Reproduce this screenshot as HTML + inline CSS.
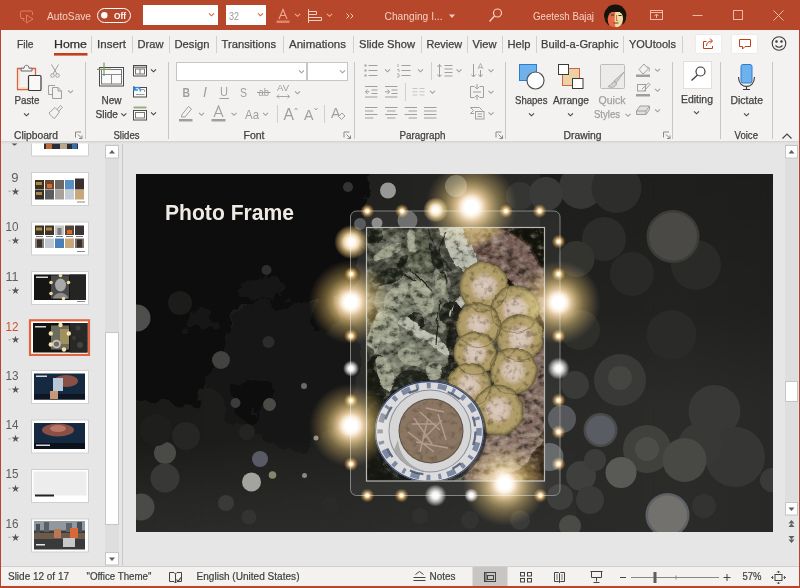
<!DOCTYPE html>
<html lang="en">
<head>
<meta charset="utf-8">
<title>Changing Images - PowerPoint</title>
<style>
html,body{margin:0;padding:0;}
body{width:800px;height:588px;overflow:hidden;position:relative;background:#E6E6E6;font-family:"Liberation Sans",sans-serif;}
.abs{position:absolute;}
#titlebar{left:0;top:0;width:800px;height:30px;background:#B7472A;}
#tabs{left:0;top:30px;width:800px;height:27px;background:#F3F2F1;}
#ribbon{left:0;top:57px;width:800px;height:84px;background:#F3F2F1;}
#ribbonshadow{left:0;top:141px;width:800px;height:3px;background:linear-gradient(#D2D0CE,#DEDEDE 50%,#E6E6E6);}
#leftpane{left:1px;top:144px;width:121px;height:422px;background:#E6E6E6;}
#splitter{left:122px;top:144px;width:1px;height:422px;background:#C8C8C8;}
#status{left:0;top:566px;width:800px;height:20px;background:#F3F2F1;border-top:1px solid #D0D0D0;box-sizing:border-box;}
#bl{left:0;top:30px;width:1px;height:558px;background:#B7472A;}
#br{left:799px;top:30px;width:1px;height:558px;background:#B7472A;}
#bb{left:0;top:586px;width:800px;height:2px;background:#B7472A;}
svg{position:absolute;left:0;top:0;overflow:hidden;will-change:transform;}
svg text{font-family:"Liberation Sans",sans-serif;}
#lights circle{mix-blend-mode:screen;}
</style>
</head>
<body>
<div id="titlebar" class="abs"></div>
<div id="tabs" class="abs"></div>
<div id="ribbon" class="abs"></div>
<div id="ribbonshadow" class="abs"></div>
<div id="leftpane" class="abs"></div>
<div id="splitter" class="abs"></div>
<div id="status" class="abs"></div>

<!-- SLIDE -->
<svg id="slide" width="800" height="588" viewBox="0 0 800 588">
<defs>
  <clipPath id="sc"><rect x="136" y="174" width="637" height="358"/></clipPath>
  <clipPath id="pc"><rect x="366.500" y="227.500" width="178" height="253.500"/></clipPath>
  <linearGradient id="bgx" x1="136" x2="773" y1="0" y2="0" gradientUnits="userSpaceOnUse">
    <stop offset="0" stop-color="#1A1A19"/>
    <stop offset="0.330" stop-color="#1F1F1E"/>
    <stop offset="0.600" stop-color="#282826"/>
    <stop offset="0.850" stop-color="#2B2B29"/>
    <stop offset="1" stop-color="#282826"/>
  </linearGradient>
  <linearGradient id="trd" x1="0" x2="0" y1="174" y2="404" gradientUnits="userSpaceOnUse">
    <stop offset="0" stop-color="#141413" stop-opacity="0.550"/>
    <stop offset="0.600" stop-color="#141413" stop-opacity="0.400"/>
    <stop offset="1" stop-color="#141413" stop-opacity="0"/>
  </linearGradient>
  <linearGradient id="blg" x1="0" x2="0" y1="440" y2="532" gradientUnits="userSpaceOnUse">
    <stop offset="0" stop-color="#2E2E2C" stop-opacity="0"/>
    <stop offset="0.600" stop-color="#2E2E2C" stop-opacity="0.550"/>
    <stop offset="1" stop-color="#2E2E2C" stop-opacity="0.800"/>
  </linearGradient>
  <filter id="rough3" x="-10%" y="-10%" width="120%" height="120%">
    <feTurbulence type="fractalNoise" baseFrequency="0.035" numOctaves="4" seed="2" result="t"/>
    <feDisplacementMap in="SourceGraphic" in2="t" scale="38" xChannelSelector="R" yChannelSelector="G"/>
  </filter>
  <radialGradient id="gl">
    <stop offset="0" stop-color="#FFFFFF"/>
    <stop offset="0.140" stop-color="#FFFFFF"/>
    <stop offset="0.220" stop-color="#F8E8D0"/>
    <stop offset="0.320" stop-color="#D4B484"/>
    <stop offset="0.450" stop-color="#9A824C"/>
    <stop offset="0.600" stop-color="#62522A"/>
    <stop offset="0.780" stop-color="#332914"/>
    <stop offset="0.900" stop-color="#15110A"/>
    <stop offset="1" stop-color="#000000"/>
  </radialGradient>
  <radialGradient id="gs">
    <stop offset="0" stop-color="#FFFFFF"/>
    <stop offset="0.220" stop-color="#FFF0D0"/>
    <stop offset="0.420" stop-color="#C89850"/>
    <stop offset="0.700" stop-color="#553E1A"/>
    <stop offset="1" stop-color="#000000"/>
  </radialGradient>
  <radialGradient id="gw">
    <stop offset="0" stop-color="#FFFFFF"/>
    <stop offset="0.300" stop-color="#F4F4F4"/>
    <stop offset="0.600" stop-color="#9A9A9A"/>
    <stop offset="0.850" stop-color="#3A3A3A"/>
    <stop offset="1" stop-color="#000000"/>
  </radialGradient>
  <radialGradient id="gm">
    <stop offset="0" stop-color="#FFFFFF"/>
    <stop offset="0.250" stop-color="#FFF6E8"/>
    <stop offset="0.450" stop-color="#E8D0A8"/>
    <stop offset="0.650" stop-color="#9A8050"/>
    <stop offset="0.850" stop-color="#4A3C20"/>
    <stop offset="1" stop-color="#000000"/>
  </radialGradient>
  <filter id="rough" x="-5%" y="-5%" width="110%" height="110%">
    <feTurbulence type="fractalNoise" baseFrequency="0.055" numOctaves="3" seed="7" result="t"/>
    <feDisplacementMap in="SourceGraphic" in2="t" scale="6" xChannelSelector="R" yChannelSelector="G"/>
  </filter>
  <filter id="rough2" x="-5%" y="-5%" width="110%" height="110%">
    <feTurbulence type="fractalNoise" baseFrequency="0.08" numOctaves="2" seed="3" result="t"/>
    <feDisplacementMap in="SourceGraphic" in2="t" scale="4" xChannelSelector="R" yChannelSelector="G"/>
  </filter>
  <filter id="npk" x="0" y="0" width="100%" height="100%" color-interpolation-filters="sRGB">
    <feTurbulence type="fractalNoise" baseFrequency="0.16" numOctaves="3" seed="5" result="t"/>
    <feColorMatrix in="t" type="matrix" values="0 0 0 0 0.200  0 0 0 0 0.180  0 0 0 0 0.100  1 0 0 0 0"/>
    <feComponentTransfer result="n"><feFuncA type="table" tableValues="1 1 0.9 0.55 0.2 0 0 0 0 0 0"/></feComponentTransfer>
    <feComposite in="n" in2="SourceGraphic" operator="in"/>
  </filter>
  <filter id="ndark" x="0" y="0" width="100%" height="100%" color-interpolation-filters="sRGB">
    <feTurbulence type="fractalNoise" baseFrequency="0.13 0.16" numOctaves="4" seed="11"/>
    <feColorMatrix type="matrix" values="0 0 0 0 0.050  0 0 0 0 0.050  0 0 0 0 0.040  1 0 0 0 0"/>
    <feComponentTransfer><feFuncA type="table" tableValues="0.7 0.7 0.62 0.42 0.16 0 0 0 0 0 0"/></feComponentTransfer>
  </filter>
  <filter id="nlight" x="0" y="0" width="100%" height="100%" color-interpolation-filters="sRGB">
    <feTurbulence type="fractalNoise" baseFrequency="0.13 0.16" numOctaves="4" seed="11"/>
    <feColorMatrix type="matrix" values="0 0 0 0 0.930  0 0 0 0 0.930  0 0 0 0 0.880  1 0 0 0 0"/>
    <feComponentTransfer><feFuncA type="table" tableValues="0 0 0 0 0 0 0.08 0.2 0.3 0.35 0.35"/></feComponentTransfer>
  </filter>
  <radialGradient id="pk">
    <stop offset="0" stop-color="#DCCCC0"/>
    <stop offset="0.400" stop-color="#D2BEAA"/>
    <stop offset="0.600" stop-color="#B29E6C"/>
    <stop offset="0.850" stop-color="#AE9C68"/>
    <stop offset="1" stop-color="#746840"/>
  </radialGradient>
</defs>
<g clip-path="url(#sc)">
  <rect x="136" y="174" width="637" height="358" fill="url(#bgx)"/>
  <!-- black upper-left region with ragged edge -->
  <g filter="url(#rough3)">
    <ellipse cx="285" cy="372" rx="72" ry="74" fill="#181817"/>
    <path d="M100 140 H372 L366 200 L362 250 L352 285 L318 296 L282 304 L236 312 L218 350 L212 396 L165 404 L100 398 Z" fill="#0B0B0A"/>
    <ellipse cx="322" cy="300" rx="12" ry="36" fill="#111110"/>
    <ellipse cx="252" cy="400" rx="14" ry="22" fill="#0F0F0E"/>
    <ellipse cx="330" cy="405" rx="9" ry="28" fill="#131312"/>
    <ellipse cx="262" cy="290" rx="24" ry="16" fill="#161615"/>
    <ellipse cx="200" cy="318" rx="18" ry="12" fill="#131312"/>
  </g>
  <rect x="540" y="174" width="233" height="230" fill="url(#trd)"/>
  <rect x="136" y="440" width="440" height="92" fill="url(#blg)"/>
  <!-- bokeh -->
  <g id="bokeh">
    <circle cx="137" cy="318" r="13.500" fill="#4E4E4C"/>
    <circle cx="141" cy="507" r="13.500" fill="#4A4A48"/>
    <circle cx="180" cy="303" r="12" fill="#1C1C1B"/>
    <circle cx="221" cy="360" r="9" fill="#424240"/>
    <circle cx="165" cy="453" r="11" fill="#4A4A47"/>
    <circle cx="165" cy="478" r="14.500" fill="#383836"/>
    <circle cx="186" cy="436" r="14" fill="#262625"/>
    <circle cx="156" cy="430" r="16" fill="#1E1E1D"/>
    <circle cx="251.500" cy="482" r="9.500" fill="#A4A49E"/>
    <circle cx="260" cy="459" r="8" fill="#585A66"/>
    <circle cx="272.500" cy="475" r="3.800" fill="#86866E"/>
    <circle cx="269.500" cy="404.500" r="6.500" fill="#4A4A47"/>
    <circle cx="235.500" cy="403" r="5" fill="#3C3C3A"/>
    <circle cx="226" cy="503" r="8" fill="#3A3A38"/>
    <circle cx="249" cy="517" r="7.500" fill="#333331"/>
    <circle cx="247" cy="432" r="8" fill="#242423"/>
    <circle cx="266.500" cy="270" r="5" fill="#2E2E2D"/>
    <circle cx="268.500" cy="342" r="6" fill="#2C2C2B"/>
    <circle cx="304" cy="386" r="3" fill="#6A6A68"/>
    <circle cx="316" cy="438" r="2.500" fill="#8A8A78"/>
    <circle cx="304.500" cy="475.500" r="2.500" fill="#8A8A80"/>
    <circle cx="388" cy="190.500" r="8" fill="#989896"/>
    <circle cx="456" cy="186" r="11" fill="#5E5E56"/>
    <circle cx="407.500" cy="220.500" r="10" fill="#666664"/>
    <circle cx="377" cy="223" r="5.500" fill="#868686"/>
    <circle cx="360" cy="224" r="6" fill="#4E5256"/>
    <circle cx="520" cy="196" r="14" fill="#353533"/>
    <circle cx="348" cy="187" r="5" fill="#333331"/>
    <!-- right upper -->
    <circle cx="581" cy="187" r="22" fill="#373735"/>
    <circle cx="616.500" cy="188" r="25" fill="#2D2D2B"/>
    <circle cx="546" cy="194" r="17" fill="#3A3A38"/>
    <circle cx="604" cy="239" r="22" fill="#2C2C2A"/>
    <circle cx="576.500" cy="259" r="18" fill="#333330"/>
    <circle cx="632" cy="274" r="22" fill="#292927"/>
    <circle cx="696" cy="265" r="25" fill="#2A2A28"/>
    <circle cx="673" cy="236.500" r="26.500" fill="#3C3C39"/>
    <circle cx="673" cy="236.500" r="24" fill="#4A4946"/>
    <circle cx="671.500" cy="335" r="25" fill="#2A2A28"/>
    <circle cx="580" cy="330" r="20" fill="#2E2E2B"/>
    <!-- right lower -->
    <circle cx="714.500" cy="411" r="26" fill="#383936"/>
    <circle cx="735" cy="457" r="30" fill="#363734"/>
    <circle cx="700" cy="445" r="22" fill="#383936"/>
    <circle cx="620" cy="380" r="26" fill="#393937"/>
    <circle cx="620" cy="378" r="12" fill="#454542"/>
    <circle cx="575" cy="385" r="14" fill="#3A3A38"/>
    <circle cx="600.500" cy="430" r="17" fill="#4A4A4A"/>
    <circle cx="600.500" cy="430" r="14.500" fill="#595C62"/>
    <circle cx="562" cy="419" r="14" fill="#55575B"/>
    <circle cx="647" cy="449" r="24" fill="#40403D"/>
    <circle cx="647" cy="449" r="12" fill="#4C4C49"/>
    <circle cx="684.500" cy="460" r="22" fill="#484845"/>
    <circle cx="621" cy="472.500" r="15.500" fill="#595956"/>
    <circle cx="581" cy="476" r="15" fill="#3F403D"/>
    <circle cx="595" cy="460" r="11" fill="#3C3D3A"/>
    <circle cx="549.500" cy="457" r="14" fill="#5E6262"/>
    <circle cx="570" cy="526" r="11" fill="#4A4A47"/>
    <circle cx="590" cy="500" r="14" fill="#3A3B38"/>
    <circle cx="560" cy="497" r="13" fill="#3E3F3C"/>
    <circle cx="667.500" cy="515" r="22" fill="#5E6066"/>
    <circle cx="667.500" cy="515" r="19.500" fill="#72716E"/>
    <circle cx="704" cy="506" r="12" fill="#333432"/>
    <circle cx="772" cy="480" r="12" fill="#3A3B38"/>
    <circle cx="520" cy="520" r="10" fill="#3A3A38"/>
    <circle cx="470" cy="520" r="9" fill="#333331"/>
    <circle cx="420" cy="516" r="8" fill="#30302E"/>
    <circle cx="330" cy="505" r="9" fill="#2A2A28"/>
  </g>
  <!-- title -->
  <text x="165" y="220" font-size="21.500" font-weight="700" fill="#EFEAE4" textLength="129" lengthAdjust="spacingAndGlyphs">Photo Frame</text>
  <!-- frame -->
  <rect x="350.500" y="211" width="209.500" height="284.500" rx="6" fill="#FFFFFF" fill-opacity="0.060" stroke="#9A9A98" stroke-opacity="0.800" stroke-width="1"/>
  <!-- photo -->
  <g clip-path="url(#pc)">
    <g filter="url(#rough)">
    <rect x="360" y="220" width="190" height="270" fill="#484C40"/>
    <!-- mid-tone leaf masses -->
    <g fill="#767A68">
      <ellipse cx="392" cy="246" rx="26" ry="16" transform="rotate(15 392 246)" fill="#5E6252"/>
      <ellipse cx="420" cy="256" rx="14" ry="26" transform="rotate(-10 420 256)" fill="#5A5E4E"/>
      <ellipse cx="408" cy="300" rx="34" ry="28"/>
      <ellipse cx="392" cy="345" rx="26" ry="30"/>
      <ellipse cx="428" cy="352" rx="26" ry="18" transform="rotate(30 428 352)"/>
      <ellipse cx="440" cy="300" rx="10" ry="34"/>
      <ellipse cx="412" cy="384" rx="26" ry="10"/>
    </g>
    <!-- dark gaps -->
    <g fill="#23261E">
      <ellipse cx="388" cy="277" rx="16" ry="7" transform="rotate(-15 388 277)"/>
      <ellipse cx="374" cy="236" rx="9" ry="7"/>
      <ellipse cx="416" cy="322" rx="9" ry="9"/>
      <ellipse cx="436" cy="258" rx="5" ry="16" transform="rotate(-25 436 258)"/>
      <ellipse cx="449" cy="313" rx="9" ry="12" transform="rotate(15 449 313)"/>
      <ellipse cx="372" cy="316" rx="6" ry="8"/>
      <ellipse cx="376" cy="380" rx="12" ry="26"/>
      <ellipse cx="398" cy="392" rx="22" ry="12"/>
      <ellipse cx="412" cy="381" rx="18" ry="11"/>
      <ellipse cx="370" cy="440" rx="14" ry="50"/>
      <ellipse cx="386" cy="478" rx="26" ry="12"/>
      <ellipse cx="447" cy="372" rx="10" ry="5" transform="rotate(-30 447 372)"/>
      <ellipse cx="402" cy="262" rx="4" ry="10" transform="rotate(40 402 262)"/>
    </g>
    <!-- light leaves -->
    <g fill="#9A9E88">
      <ellipse cx="396.500" cy="296" rx="8" ry="19" transform="rotate(35 396.500 296)"/>
      <ellipse cx="422.500" cy="296" rx="9" ry="20" transform="rotate(-22 422.500 296)"/>
      <ellipse cx="386.500" cy="328" rx="12" ry="17" transform="rotate(-25 386.500 328)"/>
      <ellipse cx="373" cy="340" rx="6" ry="13"/>
      <ellipse cx="384.500" cy="374" rx="8" ry="18" transform="rotate(-22 384.500 374)"/>
      <ellipse cx="410" cy="357" rx="13" ry="8" transform="rotate(25 410 357)"/>
      <ellipse cx="434" cy="371" rx="8" ry="9"/>
      <ellipse cx="388" cy="252" rx="16" ry="5" transform="rotate(-25 388 252)"/>
      <ellipse cx="412" cy="240" rx="4" ry="13" transform="rotate(-12 412 240)"/>
      <ellipse cx="440" cy="284" rx="5" ry="10" transform="rotate(-20 440 284)"/>
    </g>
    <g fill="#B6B8AA">
      <path d="M436 220 H466 L478 266 L470 276 L452 262 Z"/>
      <ellipse cx="461" cy="302" rx="4.500" ry="18" transform="rotate(35 461 302)"/>
      <path d="M397 323 L405 317 L455 349 L451 359 Z"/>
    </g>
    <g fill="none" stroke="#22241C" stroke-width="1.300">
      <path d="M428 228 C432 250 444 262 452 270 M446 232 C436 244 438 262 446 282 M440 300 L436 345 M410 270 L432 292 M396 268 L416 280"/>
    </g>
    <!-- pan upper right -->
    <path d="M462 220 H550 V340 L520 300 L500 272 L479 264 Z" fill="#786158"/>
    <path d="M462 220 H504 C496 238 480 246 468 246 Z" fill="#8A7050"/>
    <path d="M476 252 C500 250 530 270 548 310" fill="none" stroke="#5A443A" stroke-width="6" opacity="0.700"/>
    <path d="M497 220 H550 V290 C542 258 524 236 497 226 Z" fill="#16120F"/>
    <path d="M497 226 C524 236 542 258 550 290" fill="none" stroke="#3A2C24" stroke-width="2"/>
    <!-- pan right edge / bottom right -->
    <path d="M550 296 V490 H460 L470 466 L486 440 L496 400 L500 300 Z" fill="#806A5E"/>
    <path d="M550 420 L500 490 H550 Z" fill="#4A3828"/>
    <path d="M486 440 L520 428 L545 440 L520 470 L480 482 Z" fill="#8C766A"/>
    <!-- dark gaps -->
    <path d="M500 272 L526 296 L545 326 L538 350 L522 304 Z" fill="#1E1814"/>
    <path d="M455 300 L462 310 L456 340 L462 368 L450 380 L446 340 Z" fill="#24241C"/>
    </g>
    <rect x="366" y="227" width="179" height="255" filter="url(#ndark)"/>
    <rect x="366" y="227" width="179" height="255" filter="url(#nlight)"/>
    <path d="M360 392 L384 396 L376 430 L384 468 L410 486 H360 Z" fill="#15150F" opacity="0.780"/>
    <path d="M360 340 L374 350 L380 392 L360 400 Z" fill="#15150F" opacity="0.550"/>
    <!-- pancakes -->
    <g filter="url(#rough2)">
    <g>
      <circle cx="484" cy="286.500" r="24.500" fill="url(#pk)"/>
      <circle cx="515" cy="309.500" r="24" fill="url(#pk)"/>
      <circle cx="520" cy="338" r="23.500" fill="url(#pk)"/>
      <circle cx="478.500" cy="325" r="22.500" fill="url(#pk)"/>
      <circle cx="513" cy="371" r="23.500" fill="url(#pk)"/>
      <circle cx="475" cy="353" r="21.500" fill="url(#pk)"/>
      <circle cx="469" cy="385" r="22" fill="url(#pk)"/>
      <circle cx="498" cy="410" r="25" fill="url(#pk)"/>
    </g>
    <g fill="none" stroke="#5A4E2C" stroke-width="1.100" opacity="0.450">
      <circle cx="484" cy="286.500" r="24.500"/><circle cx="515" cy="309.500" r="24"/><circle cx="520" cy="338" r="23.500"/><circle cx="478.500" cy="325" r="22.500"/><circle cx="513" cy="371" r="23.500"/><circle cx="475" cy="353" r="21.500"/><circle cx="469" cy="385" r="22"/><circle cx="498" cy="410" r="25"/>
    </g>
    </g>
    <g filter="url(#npk)" opacity="0.420"><circle cx="484" cy="286.500" r="22"/><circle cx="515" cy="309.500" r="22"/><circle cx="520" cy="338" r="21"/><circle cx="478.500" cy="325" r="20"/><circle cx="513" cy="371" r="21"/><circle cx="475" cy="353" r="19"/><circle cx="469" cy="385" r="20"/><circle cx="498" cy="410" r="22"/></g>
    <!-- bowl -->
    <ellipse cx="429.500" cy="433" rx="57" ry="53" fill="#15171A" opacity="0.550"/>
    <ellipse cx="429.500" cy="431.500" rx="54.500" ry="50.500" fill="#DCDCDE"/>
    <ellipse cx="429.500" cy="431.500" rx="49.500" ry="46" fill="none" stroke="#4A5A80" stroke-width="5.500" stroke-dasharray="4 7 9 6 3 8" opacity="0.650"/>
    <ellipse cx="429.500" cy="431.500" rx="46" ry="43" fill="none" stroke="#2E3A58" stroke-width="2.200" stroke-dasharray="14 22 10 30" opacity="0.700"/>
    <ellipse cx="429.500" cy="431.500" rx="54" ry="50" fill="none" stroke="#3A4A72" stroke-width="1.300"/>
    <circle cx="430" cy="431" r="41.500" fill="#8A8E98"/>
    <circle cx="430" cy="431" r="40.500" fill="#D6D6D6"/>
    <path d="M394 450 A40 40 0 0 0 452 465 A34 34 0 0 1 398 440 Z" fill="#A8A8A8"/>
    <circle cx="431" cy="431" r="32.500" fill="#5E5046"/>
    <circle cx="431" cy="431" r="31.500" fill="#8A7662"/>
    <circle cx="431" cy="431" r="31" filter="url(#npk)" opacity="0.300"/>
    <g stroke="#B49A90" stroke-width="1.400" fill="none">
      <path d="M414 418 L432 444 M420 412 L440 430 M408 432 L434 452 M438 414 L446 440 M416 442 L448 448 M428 418 L420 452 M442 420 L424 438 M412 424 L436 424 M426 408 L444 412"/>
    </g>
  </g>
  <rect x="366.500" y="227.500" width="178" height="253.500" fill="none" stroke="#B8B8B4" stroke-width="1.200"/>
  <!-- lights -->
  <g id="lights">
    <circle cx="471.250" cy="207" r="46" fill="url(#gl)"/>
    <circle cx="350.700" cy="302" r="42" fill="url(#gl)"/>
    <circle cx="558.500" cy="302.500" r="42" fill="url(#gl)"/>
    <circle cx="351" cy="425.500" r="42" fill="url(#gl)"/>
    <circle cx="504.600" cy="484" r="42" fill="url(#gl)"/>
    <circle cx="351.300" cy="242" r="17" fill="url(#gm)"/>
    <circle cx="435.600" cy="210" r="12.500" fill="url(#gm)"/>
    <circle cx="435.500" cy="495.500" r="11" fill="url(#gw)"/>
    <circle cx="558.500" cy="368.500" r="11" fill="url(#gw)"/>
    <circle cx="351" cy="368.500" r="8" fill="url(#gw)"/>
    <circle cx="471.300" cy="495.300" r="7" fill="url(#gw)"/>
    <circle cx="367.250" cy="211" r="7" fill="url(#gs)"/>
    <circle cx="402" cy="211" r="7" fill="url(#gs)"/>
    <circle cx="506" cy="211" r="7" fill="url(#gs)"/>
    <circle cx="539.600" cy="211" r="7" fill="url(#gs)"/>
    <circle cx="351.300" cy="274" r="7" fill="url(#gs)"/>
    <circle cx="351" cy="336" r="7" fill="url(#gs)"/>
    <circle cx="351" cy="400.500" r="7" fill="url(#gs)"/>
    <circle cx="351" cy="464" r="7" fill="url(#gs)"/>
    <circle cx="558.600" cy="241.500" r="7" fill="url(#gs)"/>
    <circle cx="558.500" cy="274" r="7" fill="url(#gs)"/>
    <circle cx="558.500" cy="336" r="7" fill="url(#gs)"/>
    <circle cx="558.500" cy="400.300" r="7" fill="url(#gs)"/>
    <circle cx="558.500" cy="432" r="7" fill="url(#gs)"/>
    <circle cx="558.500" cy="464" r="7" fill="url(#gs)"/>
    <circle cx="367.250" cy="495.500" r="7" fill="url(#gs)"/>
    <circle cx="401.500" cy="495.500" r="7" fill="url(#gs)"/>
    <circle cx="540.400" cy="495.500" r="7" fill="url(#gs)"/>
  </g>
</g>
</svg>

<!-- CHROME -->
<svg id="chrome" width="800" height="588" viewBox="0 0 800 588">
<defs>
<path id="chv" d="M-2.5 -1.2 L0 1.3 L2.5 -1.2" fill="none" stroke-width="1.1"/>
<path id="lnch" d="M0.5 6 V0.5 H6 M3 3 L7 7 M7 4 V7 H4" fill="none" stroke="#8A8886" stroke-width="1"/>
</defs>

<!-- ===== TITLE BAR ===== -->
<g id="tb" fill="none" stroke="#F2B9A6" stroke-width="1">
  <!-- start presentation icon -->
  <path d="M24.500 18.500 H22 Q20.500 18.500 20.500 17 V12.500 Q20.500 11 22 11 H31 Q32.500 11 32.500 12.500 V15" stroke="#E27E60"/>
  <path d="M26.500 15 V23 L33 19 Z" stroke="#E27E60"/>
  <path d="M22.500 18.500 L24.500 21.500" stroke="#E27E60"/>
  <!-- toggle pill -->
  <rect x="97.500" y="8.500" width="33" height="14" rx="7" stroke="#FFFFFF"/>
  <circle cx="104.300" cy="15.200" r="3.200" fill="#FFFFFF" stroke="none"/>
  <!-- font boxes -->
  <rect x="143" y="5" width="75" height="20" fill="#FFFFFF" stroke="none"/>
  <rect x="226" y="5" width="40" height="20" fill="#FFFFFF" stroke="none"/>
  <use href="#chv" x="211.500" y="14.500" stroke="#D8633F"/>
  <use href="#chv" x="260.500" y="14.500" stroke="#D8633F"/>
  <!-- font colour A -->
  <path d="M279 19 L283 9.500 L287 19 M280.500 15.500 H285.500" stroke="#F0A890" stroke-width="1.100"/>
  <rect x="276.500" y="20.500" width="13" height="2.500" fill="#E2836A" stroke="none"/>
  <use href="#chv" x="297.500" y="15" stroke="#F0A890"/>
  <!-- align icon -->
  <path d="M308.500 9 V23 M308.500 11.500 H316.500 V14.500 H308.500 M308.500 17.500 H321.500 V20.500 H308.500" stroke="#F7CFC1"/>
  <use href="#chv" x="329.500" y="15" stroke="#F0A890"/>
  <!-- chevrons >> -->
  <path d="M346.500 13.500 L349 16 L346.500 18.500 M350.500 13.500 L353 16 L350.500 18.500" stroke="#F7CFC1"/>
  <!-- title drop arrow -->
  <path d="M449 14.500 H455 L452 18 Z" fill="#F7CFC1" stroke="none"/>
  <!-- search -->
  <circle cx="497.500" cy="13" r="4" stroke="#F7CFC1" stroke-width="1.200"/>
  <path d="M494.500 16 L489.500 21.500" stroke="#F7CFC1" stroke-width="1.300"/>
  <!-- ribbon display -->
  <rect x="650.500" y="10.500" width="12" height="9" stroke="#F2B9A6"/>
  <path d="M650.500 12.500 H662.500 M656.500 18 V14.500 M654.500 16 L656.500 14 L658.500 16" stroke="#F2B9A6"/>
  <!-- window buttons -->
  <path d="M692.500 15.500 H702.500" stroke="#F0B8A6"/>
  <rect x="733.500" y="10.500" width="9" height="9" stroke="#F0B8A6"/>
  <path d="M773.500 10.500 L783.500 20.500 M783.500 10.500 L773.500 20.500" stroke="#F0B8A6"/>
</g>
<!-- avatar -->
<g id="avatar">
  <clipPath id="avc"><circle cx="615.300" cy="15.900" r="11.300"/></clipPath>
  <g clip-path="url(#avc)">
    <rect x="603" y="3" width="26" height="26" fill="#B7472A"/>
    <ellipse cx="615.300" cy="14" rx="11.500" ry="10.500" fill="#17130C"/>
    <path d="M604.500 16 C604 24 607 26 609 27 L608.500 18 Z M626 16 C626.500 23 624 25 622.500 26 L622.500 18 Z" fill="#1E1A10"/>
    <ellipse cx="615.300" cy="19.300" rx="7.600" ry="8.600" fill="#E8684A"/>
    <path d="M615.500 11.500 C622 11 623.500 16 622.800 20 C622 25 618.500 27.500 616 27.800 C614 24 614.500 16 615.500 11.500 Z" fill="#EEDCA6"/>
    <path d="M609 12.500 C611 9.500 620 9.500 622.500 12.500 C619 11.800 613 12 609 12.500 Z" fill="#17130C"/>
    <path d="M611 15 H614 M618.500 15.500 H621.500" stroke="#3A2A14" stroke-width="1.200"/>
    <path d="M616.500 15 V20.500 H618" stroke="#D85A3C" stroke-width="0.900" fill="none"/>
    <path d="M613.500 23 H618.500" stroke="#5A3A20" stroke-width="1"/>
  </g>
</g>
<g id="tbt" font-size="10.400" fill="#F6CFC2">
  <text x="47" y="19.500" textLength="44" lengthAdjust="spacingAndGlyphs">AutoSave</text>
  <text x="114" y="18.800" font-size="9.500" font-weight="700" fill="#FFFFFF" textLength="12" lengthAdjust="spacingAndGlyphs">Off</text>
  <text x="229" y="19.500" fill="#9A9A9A" textLength="10" lengthAdjust="spacingAndGlyphs">32</text>
  <text x="384.500" y="19.500" textLength="58" lengthAdjust="spacingAndGlyphs">Changing I...</text>
  <text x="533" y="19.500" textLength="61" lengthAdjust="spacingAndGlyphs">Geetesh Bajaj</text>
</g>

<!-- ===== TABS ===== -->
<g id="tabt" font-size="10.800" fill="#3F3F3F" stroke="#3F3F3F" stroke-width="0.250">
  <text x="17" y="48.400" textLength="16.500" lengthAdjust="spacingAndGlyphs">File</text>
  <text x="54" y="48.400" fill="#252423" textLength="33" lengthAdjust="spacingAndGlyphs">Home</text>
  <text x="97" y="48.400" textLength="29" lengthAdjust="spacingAndGlyphs">Insert</text>
  <text x="137.500" y="48.400" textLength="26" lengthAdjust="spacingAndGlyphs">Draw</text>
  <text x="174.500" y="48.400" textLength="35" lengthAdjust="spacingAndGlyphs">Design</text>
  <text x="221.500" y="48.400" textLength="54.500" lengthAdjust="spacingAndGlyphs">Transitions</text>
  <text x="289" y="48.400" textLength="57" lengthAdjust="spacingAndGlyphs">Animations</text>
  <text x="359" y="48.400" textLength="56" lengthAdjust="spacingAndGlyphs">Slide Show</text>
  <text x="426.500" y="48.400" textLength="35.500" lengthAdjust="spacingAndGlyphs">Review</text>
  <text x="472.500" y="48.400" textLength="24" lengthAdjust="spacingAndGlyphs">View</text>
  <text x="507.500" y="48.400" textLength="23" lengthAdjust="spacingAndGlyphs">Help</text>
  <text x="541" y="48.400" textLength="77.500" lengthAdjust="spacingAndGlyphs">Build-a-Graphic</text>
  <text x="629" y="48.400" textLength="47" lengthAdjust="spacingAndGlyphs">YOUtools</text>
</g>
<g id="tabl" stroke="#D2D0CE" stroke-width="1">
  <path d="M91.500 36 V53 M132.500 36 V53 M169.500 36 V53 M216.500 36 V53 M283.500 36 V53 M353.500 36 V53 M421.500 36 V53 M467.500 36 V53 M502.500 36 V53 M536.500 36 V53 M623.500 36 V53 M682.500 36 V53"/>
</g>
<rect x="54" y="53" width="33.500" height="2.600" fill="#C43E1C"/>
<rect x="695.500" y="34.500" width="26" height="19" rx="1.500" fill="#FFFFFF" stroke="#EDEBE9"/>
<rect x="731.500" y="34.500" width="26" height="19" rx="1.500" fill="#FFFFFF" stroke="#EDEBE9"/>
<g fill="none" stroke="#C43E1C" stroke-width="1">
  <path d="M706.500 41.500 H703.500 V48.500 H712.500 V46 M706.500 46 C706.500 42.500 709 41 712 41 M710 38.500 L712.500 41 L710 43.500"/>
  <path d="M739.500 39.500 H750.500 V46.500 H745 L742.500 49 V46.500 H739.500 Z"/>
</g>
<!-- ===== LEFT PANE ===== -->
<g id="thumbs">
  <!-- scrollbars -->
  <rect x="105" y="144" width="14" height="422" fill="#DEDEDE"/>
  <rect x="105.500" y="145.500" width="13" height="12.500" fill="#FFFFFF" stroke="#C6C6C6"/>
  <path d="M109 153.500 L112 150 L115 153.500 Z" fill="#5E5E5E"/>
  <rect x="105.500" y="332.500" width="13" height="192" fill="#FFFFFF" stroke="#C6C6C6"/>
  <rect x="105.500" y="552.500" width="13" height="12.500" fill="#FFFFFF" stroke="#C6C6C6"/>
  <path d="M109 557.500 L112 561 L115 557.500 Z" fill="#5E5E5E"/>
  <rect x="785" y="144" width="13" height="372" fill="#DEDEDE"/>
  <rect x="785.500" y="145.500" width="12" height="12.500" fill="#FFFFFF" stroke="#C6C6C6"/>
  <path d="M788.500 153.500 L791.500 150 L794.500 153.500 Z" fill="#5E5E5E"/>
  <rect x="785.500" y="381.500" width="12" height="20" fill="#FFFFFF" stroke="#C6C6C6"/>
  <rect x="785.500" y="502.500" width="12" height="12.500" fill="#FFFFFF" stroke="#C6C6C6"/>
  <path d="M788.500 507.500 L791.500 511 L794.500 507.500 Z" fill="#5E5E5E"/>
  <path d="M788.500 523.500 L791.500 520 L794.500 523.500 Z M788.500 527 L791.500 523.500 L794.500 527 Z M788.500 536 L791.500 539.500 L794.500 536 Z M788.500 539.500 L791.500 543 L794.500 539.500 Z" fill="#5E5E5E"/>
</g>
<g id="tnums" font-size="13" fill="#5E5E5E" text-anchor="end">
  <text x="18.500" y="181.900">9</text>
  <text x="18.500" y="231.300" textLength="13" lengthAdjust="spacingAndGlyphs">10</text>
  <text x="18.500" y="280.700" textLength="13" lengthAdjust="spacingAndGlyphs">11</text>
  <text x="18.500" y="330.600" fill="#D0502C" textLength="13" lengthAdjust="spacingAndGlyphs">12</text>
  <text x="18.500" y="379.500" textLength="13" lengthAdjust="spacingAndGlyphs">13</text>
  <text x="18.500" y="428.900" textLength="13" lengthAdjust="spacingAndGlyphs">14</text>
  <text x="18.500" y="478.300" textLength="13" lengthAdjust="spacingAndGlyphs">15</text>
  <text x="18.500" y="527.700" textLength="13" lengthAdjust="spacingAndGlyphs">16</text>
</g>
<g id="tstars" font-size="9.500" fill="#555555">
  <path d="M11.500 143.500 L14.500 145.800 L17.500 143.500 Z" fill="#555555"/>
  <text x="10.500" y="194.500">★</text>
  <text x="10.500" y="244">★</text>
  <text x="10.500" y="293.500">★</text>
  <text x="10.500" y="343">★</text>
  <text x="10.500" y="392.500">★</text>
  <text x="10.500" y="442">★</text>
  <text x="10.500" y="491.500">★</text>
  <text x="10.500" y="540.500">★</text>
</g>
<path d="M8.500 191.3 H10.500 M8.500 240.8 H10.500 M8.500 290.3 H10.500 M8.500 339.8 H10.500 M8.500 389.3 H10.500 M8.500 438.8 H10.500 M8.500 488.3 H10.500 M8.500 537.3 H10.500" stroke="#8A8A8A" stroke-width="0.700" fill="none"/>
<g id="timgs">
  <!-- 8 (partial) -->
  <path d="M31.500 143.500 V156 H88.500 V143.500" fill="#FFFFFF" stroke="#CFCFCF"/>
  <rect x="44" y="143.500" width="34" height="5.500" fill="#2A2E38"/>
  <rect x="46" y="143.500" width="6" height="5.500" fill="#C06A3A"/><rect x="60" y="143.500" width="7" height="5.500" fill="#B8A890"/><rect x="72" y="143.500" width="5" height="5.500" fill="#3A6EA8"/>
  <!-- 9 -->
  <rect x="31.500" y="172.500" width="57" height="33" fill="#FFFFFF" stroke="#CFCFCF"/>
  <rect x="35" y="180" width="9" height="9.500" fill="#3A3020"/><rect x="45" y="180" width="9" height="9.500" fill="#6A4634"/><rect x="55" y="180" width="9" height="9.500" fill="#6E6660"/><rect x="65" y="180" width="9" height="9.500" fill="#5A8EC4"/><rect x="75" y="178.500" width="9" height="11" fill="#3A3030"/>
  <rect x="35" y="190" width="9" height="9.500" fill="#33302A"/><rect x="45" y="190" width="9" height="9.500" fill="#5A5C60"/><rect x="55" y="190" width="9" height="9.500" fill="#A8A09A"/><rect x="65" y="190" width="9" height="9.500" fill="#C4CCD4"/><rect x="75" y="190" width="9" height="9.500" fill="#C8A878"/>
  <rect x="47" y="184" width="5" height="4" fill="#D06A30"/><rect x="36" y="182" width="6" height="3" fill="#A88848"/><rect x="36" y="192" width="6" height="3" fill="#A88848"/>
  <rect x="77" y="201.500" width="8" height="1" fill="#888888"/>
  <!-- 10 -->
  <rect x="31.500" y="222" width="57" height="33" fill="#FFFFFF" stroke="#CFCFCF"/>
  <rect x="35" y="225.500" width="9" height="9.500" fill="#3A3020"/><rect x="45" y="225.500" width="9" height="9.500" fill="#3E3426"/><rect x="55" y="225.500" width="9" height="9.500" fill="#C4C4C4"/><rect x="65" y="225.500" width="9" height="9.500" fill="#5A4438"/><rect x="75" y="225.500" width="9" height="9.500" fill="#3A3436"/>
  <rect x="36" y="227.500" width="6" height="3" fill="#A88848"/><rect x="46" y="227.500" width="6" height="3" fill="#A88848"/><rect x="57.500" y="228" width="4" height="7" fill="#7A7A80"/><rect x="67" y="230" width="5" height="4" fill="#D06A30"/>
  <path d="M36 236.500 H43 M46 236.500 H53 M56 236.500 H63 M66 236.500 H73 M76 236.500 H83" stroke="#555555" stroke-width="0.800"/>
  <rect x="35" y="238.500" width="9" height="9.500" fill="#8A7E78"/><rect x="45" y="238.500" width="9" height="9.500" fill="#C0C8D0"/><rect x="55" y="238.500" width="9" height="9.500" fill="#4A80B8"/><rect x="65" y="238.500" width="9" height="9.500" fill="#C8A878"/><rect x="75" y="238.500" width="9" height="9.500" fill="#7A6E68"/>
  <rect x="37" y="239.500" width="5" height="8" fill="#3A302C"/><rect x="77" y="239.500" width="5" height="8" fill="#3A302C"/>
  <rect x="77" y="251" width="8" height="1" fill="#888888"/>
  <!-- 11 -->
  <rect x="31.500" y="271.500" width="57" height="33" fill="#FFFFFF" stroke="#CFCFCF"/>
  <rect x="34" y="274.500" width="52" height="25.500" fill="#151514"/>
  <rect x="70" y="274.500" width="16" height="25.500" fill="#242423"/>
  <rect x="51" y="275.500" width="18" height="23" fill="#4A4A4A"/>
  <ellipse cx="60.500" cy="285" rx="5.500" ry="6.500" fill="#A8A8A8"/>
  <path d="M53 298.500 C54 291 67 291 68.500 298.500 Z" fill="#8A8A8A"/>
  <circle cx="60.500" cy="275.500" r="1.800" fill="#F0D8A0"/><circle cx="51" cy="282.500" r="1.800" fill="#F0D8A0"/><circle cx="68.500" cy="282.500" r="1.800" fill="#F0D8A0"/><circle cx="51" cy="293.500" r="1.800" fill="#F0D8A0"/><circle cx="63.500" cy="298.500" r="1.800" fill="#F0D8A0"/>
  <rect x="36" y="276.500" width="12" height="1.500" fill="#D8D8D8"/>
  <rect x="77" y="301" width="8" height="1" fill="#888888"/>
  <!-- 12 selected -->
  <rect x="30" y="320.300" width="59" height="34.600" fill="#FFFFFF" stroke="#E0643E" stroke-width="2.200"/>
  <rect x="33" y="323" width="54.500" height="29.500" fill="#131312"/>
  <rect x="70" y="323" width="17.500" height="29.500" fill="#282826"/>
  <rect x="51" y="325.500" width="18" height="24" fill="#6A6D5C"/>
  <rect x="60" y="329" width="9" height="15" fill="#A0905F"/>
  <circle cx="56.500" cy="344" r="4.300" fill="#C4C4C8"/><circle cx="56.500" cy="344" r="2.600" fill="#7A6858"/>
  <circle cx="60.500" cy="325" r="2.200" fill="#F4E0B0"/><circle cx="50.800" cy="333.500" r="2.200" fill="#F4E0B0"/><circle cx="68.800" cy="333.500" r="2.200" fill="#F4E0B0"/><circle cx="50.800" cy="344.500" r="2.200" fill="#F4E0B0"/><circle cx="64" cy="349.500" r="2.200" fill="#F4E0B0"/>
  <circle cx="78" cy="328" r="2.500" fill="#3E3E3C"/><circle cx="80" cy="345" r="3" fill="#444442"/><circle cx="74" cy="338" r="2" fill="#3A3A38"/>
  <rect x="35" y="326" width="11" height="1.500" fill="#D8D8D8"/>
  <!-- 13 -->
  <rect x="31.500" y="370.500" width="57" height="33" fill="#FFFFFF" stroke="#CFCFCF"/>
  <rect x="34" y="373.500" width="51" height="26" fill="#152A40"/>
  <ellipse cx="66" cy="381" rx="12" ry="6" fill="#8A5048"/>
  <rect x="34" y="394" width="51" height="5.500" fill="#0E1622"/>
  <rect x="53" y="378" width="10" height="13" fill="#B8C8D8"/><rect x="50" y="391" width="8" height="8" fill="#C89878"/>
  <rect x="36" y="375.500" width="11" height="1.500" fill="#D8D8D8"/>
  <!-- 14 -->
  <rect x="31.500" y="420" width="57" height="33" fill="#FFFFFF" stroke="#CFCFCF"/>
  <rect x="34" y="423" width="51" height="26" fill="#152A40"/>
  <ellipse cx="58" cy="430" rx="16" ry="6.500" fill="#8A5048"/>
  <ellipse cx="58" cy="428.500" rx="8" ry="3.500" fill="#B87868"/>
  <rect x="34" y="443" width="51" height="6" fill="#0C121C"/>
  <rect x="36" y="444.500" width="14" height="1.500" fill="#D8D8D8"/>
  <!-- 15 -->
  <rect x="31.500" y="469.500" width="57" height="33" fill="#FFFFFF" stroke="#CFCFCF"/>
  <rect x="33.500" y="471.500" width="53" height="24" fill="#EDEDED"/>
  <rect x="35" y="494.500" width="19" height="2" fill="#222222"/>
  <!-- 16 -->
  <rect x="31.500" y="519" width="57" height="33" fill="#FFFFFF" stroke="#CFCFCF"/>
  <rect x="34" y="521.500" width="51" height="28" fill="#3A3A3C"/>
  <rect x="34" y="521.500" width="51" height="9" fill="#9098A0"/>
  <rect x="36" y="524" width="4" height="9" fill="#4A4E58"/><rect x="44" y="522" width="5" height="10" fill="#5A6068"/><rect x="66" y="523" width="6" height="9" fill="#5E646C"/><rect x="77" y="522" width="5" height="10" fill="#4A4E58"/>
  <rect x="34" y="533" width="51" height="6" fill="#6E5A48"/>
  <rect x="54" y="529" width="7" height="9" fill="#B87858"/><rect x="70" y="528" width="8" height="10" fill="#D86838"/>
  <rect x="63" y="538" width="12" height="9" fill="#C8C8C8"/>
  <rect x="36" y="544" width="9" height="1.500" fill="#E8E8E8"/>
</g>

<!-- ===== STATUS BAR ===== -->
<g id="stt" font-size="10" fill="#3F3F3F" stroke="#3F3F3F" stroke-width="0.200">
  <text x="8" y="580" textLength="61" lengthAdjust="spacingAndGlyphs">Slide 12 of 17</text>
  <text x="86.500" y="580" textLength="65" lengthAdjust="spacingAndGlyphs">"Office Theme"</text>
  <text x="196.500" y="580" textLength="103" lengthAdjust="spacingAndGlyphs">English (United States)</text>
  <text x="429.500" y="580" textLength="26" lengthAdjust="spacingAndGlyphs">Notes</text>
  <text x="742.500" y="580" textLength="19" lengthAdjust="spacingAndGlyphs">57%</text>
</g>
<rect x="472.500" y="567" width="35" height="20" fill="#C8C6C4"/>
<g fill="none" stroke="#444444" stroke-width="1">
  <!-- spell book -->
  <path d="M169.500 572.500 H174 L175.500 574 L177 572.500 H181.500 V581.500 H177 L175.500 583 L174 581.500 H169.500 Z M175.500 574 V583"/>
  <path d="M176.500 579.500 L178 581.500 L181 577.500" stroke-width="1.200"/>
  <!-- notes icon -->
  <path d="M413.500 577.500 H425.500 M413.500 580.500 H425.500 M415.500 574.500 L419.500 571.500 L423.500 574.500" stroke-width="1"/>
  <!-- normal view -->
  <rect x="484.500" y="572.500" width="11" height="9"/>
  <rect x="487.500" y="575.500" width="6" height="4" />
  <path d="M486 572.500 V581.500"/>
  <!-- sorter -->
  <rect x="520.500" y="572.500" width="4" height="3.500"/><rect x="527.500" y="572.500" width="4" height="3.500"/><rect x="520.500" y="578.500" width="4" height="3.500"/><rect x="527.500" y="578.500" width="4" height="3.500"/>
  <!-- reading -->
  <path d="M554.500 572.500 H558.500 L559.500 573.500 L560.500 572.500 H564.500 V581.500 H560.500 L559.500 582.500 L558.500 581.500 H554.500 Z M559.500 573.500 V582.500"/>
  <path d="M556 575 H558 M556 577 H558 M556 579 H558 M561 575 H563 M561 577 H563 M561 579 H563" stroke-width="0.700"/>
  <!-- slideshow -->
  <path d="M590.500 571.500 H602.500 M591.500 571.500 V577.500 H601.500 V571.500 M596.500 577.500 V581.500 M593.500 582.500 H599.500"/>
  <!-- zoom -->
  <path d="M620 577.500 H626"/>
  <path d="M631 577.500 H719" stroke="#8A8886"/>
  <path d="M676 575.500 V579.500" stroke="#8A8886"/>
  <rect x="653.500" y="572" width="3" height="11" fill="#605E5C" stroke="none"/>
  <path d="M723.500 577.500 H730.500 M727 574 V581"/>
  <!-- fit -->
  <rect x="775" y="574.500" width="7" height="6"/>
  <path d="M778.500 571 V573 M777 572.500 L778.500 571 L780 572.500 M778.500 584 V582 M777 582.500 L778.500 584 L780 582.500 M771.500 577.500 H773.500 M773 576 L771.500 577.500 L773 579 M785.500 577.500 H783.500 M784 576 L785.500 577.500 L784 579" stroke-width="0.900"/>
</g>

<!-- ===== RIBBON ===== -->
<g id="rsep" stroke="#C8C6C4" stroke-width="1">
  <path d="M85.500 62 V139 M168.500 62 V139 M354.500 62 V139 M505.500 62 V139 M672.500 62 V139 M720.500 62 V139 M772.500 62 V139"/>
  <path d="M277.500 105 V123 M324.500 105 V123 M431.500 62 V80 M405.500 83 V101" stroke="#D2D0CE"/>
</g>
<rect x="176.500" y="62.500" width="130" height="18" fill="#FFFFFF" stroke="#C8C6C4"/>
<rect x="307.500" y="62.500" width="40" height="18" fill="#FFFFFF" stroke="#C8C6C4"/>
<g id="rlabels" font-size="10.600" fill="#3F3F3F" stroke="#3F3F3F" stroke-width="0.250">
  <text x="14.500" y="104.400" textLength="25" lengthAdjust="spacingAndGlyphs">Paste</text>
  <text x="14" y="138.900" font-size="10.200" textLength="44" lengthAdjust="spacingAndGlyphs">Clipboard</text>
  <text x="101.500" y="104.400" textLength="20" lengthAdjust="spacingAndGlyphs">New</text>
  <text x="95.500" y="118.300" textLength="22.500" lengthAdjust="spacingAndGlyphs">Slide</text>
  <text x="113.500" y="138.900" font-size="10.200" textLength="26" lengthAdjust="spacingAndGlyphs">Slides</text>
  <text x="243.500" y="138.900" font-size="10.200" textLength="21" lengthAdjust="spacingAndGlyphs">Font</text>
  <text x="399.500" y="138.900" font-size="10.200" textLength="46" lengthAdjust="spacingAndGlyphs">Paragraph</text>
  <text x="515" y="104.400" textLength="32.500" lengthAdjust="spacingAndGlyphs">Shapes</text>
  <text x="553" y="104.400" textLength="36" lengthAdjust="spacingAndGlyphs">Arrange</text>
  <text x="598.500" y="104.400" fill="#A19F9D" stroke="#A19F9D" textLength="27" lengthAdjust="spacingAndGlyphs">Quick</text>
  <text x="594" y="118.300" fill="#A19F9D" stroke="#A19F9D" textLength="26" lengthAdjust="spacingAndGlyphs">Styles</text>
  <text x="563.500" y="138.900" font-size="10.200" textLength="38" lengthAdjust="spacingAndGlyphs">Drawing</text>
  <text x="681" y="102.500" textLength="32" lengthAdjust="spacingAndGlyphs">Editing</text>
  <text x="730.500" y="104.400" textLength="32.500" lengthAdjust="spacingAndGlyphs">Dictate</text>
  <text x="734.500" y="138.900" font-size="10.200" textLength="23.500" lengthAdjust="spacingAndGlyphs">Voice</text>
</g>
<g id="rchev" stroke="#444444">
  <use href="#chv" x="26.500" y="114.500"/>
  <use href="#chv" x="123.800" y="114.500"/>
  <use href="#chv" x="153.500" y="70.500"/>
  <use href="#chv" x="153.500" y="113.500"/>
  <use href="#chv" x="531.500" y="114.500"/>
  <use href="#chv" x="570.500" y="114.500"/>
  <use href="#chv" x="696.500" y="112.500"/>
  <use href="#chv" x="746.500" y="114.500"/>
  <path d="M782.500 138.500 L787 134 L791.500 138.500" fill="none" stroke-width="1.200"/>
</g>
<g id="rchevg" stroke="#A19F9D">
  <use href="#chv" x="70.500" y="91.500"/>
  <use href="#chv" x="301.500" y="71.500"/>
  <use href="#chv" x="342.500" y="71.500"/>
  <use href="#chv" x="297.500" y="92.500"/>
  <use href="#chv" x="201.500" y="114"/>
  <use href="#chv" x="234" y="114"/>
  <use href="#chv" x="265.500" y="114"/>
  <use href="#chv" x="387.500" y="70.500"/>
  <use href="#chv" x="420.500" y="70.500"/>
  <use href="#chv" x="459" y="70.500"/>
  <use href="#chv" x="491" y="70.500"/>
  <use href="#chv" x="432.500" y="92"/>
  <use href="#chv" x="491" y="92"/>
  <use href="#chv" x="491" y="113.500"/>
  <use href="#chv" x="628" y="115"/>
  <use href="#chv" x="657.500" y="70"/>
  <use href="#chv" x="657.500" y="90"/>
  <use href="#chv" x="657.500" y="110.500"/>
</g>
<g id="rlaunch">
  <use href="#lnch" x="75" y="131.500"/>
  <use href="#lnch" x="343.500" y="131.500"/>
  <use href="#lnch" x="495.500" y="131.500"/>
  <use href="#lnch" x="663" y="131.500"/>
</g>

<!-- Clipboard group -->
<g fill="none" stroke-width="1">
  <path d="M22 68.500 H17.500 V89.500 H28" stroke="#D8633F" stroke-width="1.300"/>
  <path d="M31 68.500 H35.500 V75.500" stroke="#D8633F" stroke-width="1.300"/>
  <path d="M19 85 V70 M19 88 H27" stroke="#F2DCC0" stroke-width="1.400"/>
  <path d="M21 71 V68.200 H24 C24 64.300 29 64.300 29 68.200 H32 V71 Z" stroke="#6A6866" fill="#F3F2F1"/>
  <rect x="28.500" y="75.500" width="12.500" height="15" rx="1" stroke="#3B3A39" fill="#F8F8F8" stroke-width="1.200"/>
  <!-- scissors -->
  <g stroke="#A19F9D">
    <path d="M51.500 64.500 L57 74 M58.500 64.500 L53 74"/>
    <circle cx="52.500" cy="75.500" r="1.800"/>
    <circle cx="57.500" cy="75.500" r="1.800"/>
  </g>
  <!-- copy -->
  <g stroke="#A19F9D">
    <path d="M52.500 94.500 H48.500 V85.500 H55 "/>
    <path d="M52.500 87.500 H58 L61.500 91 V98.500 H52.500 Z M58 87.500 V91 H61.500"/>
  </g>
  <!-- format painter -->
  <g stroke="#A19F9D">
    <path d="M49 113 L55 107.500 L59.500 112 L54.500 118.500 C52.500 117.500 50.500 115.500 49 113 Z"/>
    <path d="M57 109.500 L60.500 105.500 L62.500 107.500 L58.500 111.500"/>
  </g>
</g>
<!-- Slides group -->
<g fill="none" stroke="#4A4A4A" stroke-width="1">
  <rect x="99.500" y="67.500" width="24" height="18.500" fill="#FAFAFA"/>
  <rect x="101.500" y="69.500" width="20" height="14.500" stroke="#777777"/>
  <path d="M101.500 74.500 H121.500 M111.500 74.500 V84" stroke="#8A8A8A"/>
  <path d="M104 62.500 V76 M97 69.300 H111" stroke="#7E9462" stroke-width="1.200"/>
  <!-- layout -->
  <rect x="133.500" y="65.500" width="13" height="10.500" fill="#FAFAFA"/>
  <rect x="135.500" y="69" width="9" height="5" stroke="#777777"/>
  <path d="M134 67.300 H146 " stroke="#8A8A8A" stroke-width="1.600"/>
  <path d="M140 69 V74" stroke="#777777"/>
  <!-- reset -->
  <rect x="133.500" y="87.500" width="13" height="9.500" fill="#FAFAFA"/>
  <path d="M136 94.500 H144.500 M144.500 89.500 V92 M141 89.500 H144" stroke="#9A9A9A"/>
  <path d="M140.500 91.500 C140.500 87 136 86 134.500 89.500 M134 86 V90 H138" stroke="#3C8FDD" stroke-width="1.400"/>
  <!-- section -->
  <rect x="133.500" y="110.500" width="13" height="9.500" fill="#FAFAFA"/>
  <rect x="135.500" y="112.500" width="9" height="5.500" stroke="#777777"/>
  <path d="M133.500 107.500 H146.500" stroke="#9AB080" stroke-width="2"/>
</g>
<!-- Font group -->
<g id="fontbtns" fill="#A19F9D" font-size="13">
  <text x="182.500" y="96.500" font-weight="700" textLength="7.500" lengthAdjust="spacingAndGlyphs">B</text>
  <text x="203" y="96.500" font-style="italic" font-family="Liberation Serif,serif" font-size="14">I</text>
  <text x="220" y="96" textLength="8" lengthAdjust="spacingAndGlyphs">U</text>
  <text x="240" y="96.500" textLength="7" lengthAdjust="spacingAndGlyphs">S</text>
  <text x="258.500" y="96" font-size="11.500" textLength="10.500" lengthAdjust="spacingAndGlyphs">ab</text>
  <text x="277" y="91" font-size="9" textLength="12" lengthAdjust="spacingAndGlyphs">AV</text>
  <text x="245" y="118.500" font-size="13.500" textLength="14" lengthAdjust="spacingAndGlyphs">Aa</text>
  <text x="283.500" y="120" font-size="17" textLength="10.500" lengthAdjust="spacingAndGlyphs">A</text>
  <text x="304" y="120" font-size="14.500" textLength="9.500" lengthAdjust="spacingAndGlyphs">A</text>
  <text x="331" y="118" font-size="15" textLength="9.500" lengthAdjust="spacingAndGlyphs">A</text>
</g>
<g fill="none" stroke="#A19F9D" stroke-width="1">
  <path d="M219.500 98.500 H229"/>
  <path d="M257 92.500 H270.500"/>
  <path d="M277 96.500 H289.500 M279 94.500 L277 96.500 L279 98.500 M287.500 94.500 L289.500 96.500 L287.500 98.500" stroke-width="0.900"/>
  <!-- highlighter -->
  <path d="M182 114.500 L188.500 106.500 L191.500 109 L185 117 H181.500 Z"/>
  <rect x="179" y="119" width="13.500" height="2.500" fill="#A19F9D" stroke="none"/>
  <!-- font colour -->
  <path d="M214 117 L218.500 106 L223 117 M215.500 113.500 H221.500" stroke-width="1.200"/>
  <rect x="211.500" y="119" width="14" height="2.500" fill="#A19F9D" stroke="none"/>
  <path d="M294.500 110 L296 108 L297.500 110 M314.500 108 L316 110 L317.500 108" stroke-width="0.900"/>
  <!-- eraser -->
  <path d="M338.500 116.500 L342 113 L345 116 L341.500 119.500 Z" fill="#F3F2F1"/>
</g>
<!-- Paragraph group -->
<g fill="none" stroke="#A19F9D" stroke-width="1">
  <!-- bullets -->
  <path d="M368.500 65.500 H377.500 M368.500 70.500 H377.500 M368.500 75.500 H377.500"/>
  <path d="M364.500 64.500 h2 v2 h-2 Z M364.500 69.500 h2 v2 h-2 Z M364.500 74.500 h2 v2 h-2 Z" fill="#A19F9D" stroke="none"/>
  <!-- numbering -->
  <path d="M401.500 65.500 H410.500 M401.500 70.500 H410.500 M401.500 75.500 H410.500"/>
  <path d="M398 64 V67 M397 69.500 H399 V72 M397 74 H399 V77 H397" stroke-width="0.800"/>
  <!-- line spacing -->
  <path d="M444.500 65.500 H452.500 M444.500 69 H452.500 M444.500 72.500 H452.500 M444.500 76 H452.500"/>
  <path d="M439.500 64.500 V77 M437.500 67 L439.500 64.500 L441.500 67 M437.500 74.500 L439.500 77 L441.500 74.500"/>
  <!-- text direction -->
  <path d="M473.500 64 V77 M471.500 74.500 L473.500 77 L475.500 74.500 M480.500 70 V77 M478.500 74.500 L480.500 77 L482.500 74.500"/>
  <path d="M478 69 L480.500 63.500 L483 69 M479 67.500 H482" stroke-width="0.800"/>
  <!-- indent -->
  <path d="M365 86.500 H377.500 M371.500 90 H377.500 M371.500 93.500 H377.500 M365 97 H377.500 M369.500 91.750 H365.500 M367.500 89.500 L365.500 91.750 L367.500 94"/>
  <path d="M385 86.500 H397.500 M391.500 90 H397.500 M391.500 93.500 H397.500 M385 97 H397.500 M385 91.750 H389.500 M387.500 89.500 L389.500 91.750 L387.500 94"/>
  <!-- columns -->
  <path d="M412.500 88.500 H417.500 M419.500 88.500 H424.500 M412.500 91.750 H417.500 M419.500 91.750 H424.500 M412.500 95 H417.500 M419.500 95 H424.500" stroke="#C8C6C4"/>
  <!-- align text -->
  <path d="M474.500 86.500 H470.500 V97.500 H474.500 M479.500 86.500 H483.500 V97.500 H479.500"/>
  <path d="M477 84 V89 M475 87 L477 89 L479 87 M477 100 V95 M475 97 L477 95 L479 97 M473 92 H481"/>
  <!-- align rows -->
  <path d="M365 107.500 H377.500 M365 111 H373.500 M365 114.500 H377.500 M365 118 H373.500"/>
  <path d="M385 107.500 H397.500 M387 111 H395.500 M385 114.500 H397.500 M387 118 H395.500"/>
  <path d="M404.500 107.500 H417 M408.500 111 H417 M404.500 114.500 H417 M408.500 118 H417"/>
  <path d="M424 107.500 H436.500 M424 111 H436.500 M424 114.500 H436.500 M424 118 H436.500"/>
  <!-- smartart -->
  <path d="M470.500 107.500 H479.500 L482.500 110.500 M470.500 107.500 L473.500 110.500 L470.500 113.500 H474"/>
  <rect x="475.500" y="111.500" width="8.500" height="7.500"/>
  <path d="M477.500 114 H482 M477.500 116.500 H482"/>
</g>
<!-- Drawing group -->
<rect x="519.500" y="64.500" width="17" height="16" fill="#6FB1EA" stroke="#2B7CD3"/>
<circle cx="535.500" cy="80.500" r="8.500" fill="#FFFFFF" stroke="#505050" stroke-width="1.200"/>
<rect x="562.500" y="68.500" width="17" height="17" fill="#EBD1A6" stroke="#D8633F"/>
<rect x="558.500" y="64.500" width="10" height="10" fill="#FFFFFF" stroke="#3B3A39"/>
<rect x="572.500" y="78.500" width="10.500" height="10" fill="#FFFFFF" stroke="#3B3A39"/>
<rect x="600.500" y="64.500" width="24" height="24" rx="1" fill="#EDEBE9" stroke="#BEBBB8"/>
<path d="M624 72 L616.500 82.500 L614 81 Z M614.500 81.500 C611.500 82 611.500 85.500 608 86.500 C612 88.500 616.500 87 616.500 83 Z" fill="#D2D0CE" stroke="#A19F9D" stroke-width="0.800"/>
<g fill="none" stroke="#A19F9D" stroke-width="1">
  <path d="M639 69.500 L644 64 L648.500 69 L643 74 Z M647.500 66.500 C650 67.500 649.500 70.500 649 71.500"/>
  <rect x="636" y="74.500" width="14" height="2.500" fill="#A19F9D" stroke="none"/>
  <rect x="637.500" y="84.500" width="8" height="6.500"/>
  <path d="M642 89 L648.500 83 L650 84.500 L644 91"/>
  <rect x="636" y="94" width="14" height="2.500" fill="#A19F9D" stroke="none"/>
  <path d="M636.500 111 L640 106 H649.500 L646 111 Z M636.500 111 V114.500 H646 V111 M646 114.500 L649.500 109.500 V106" fill="#E1DFDD"/>
</g>
<!-- Editing -->
<rect x="683.500" y="61.500" width="28" height="27" fill="#FFFFFF" stroke="#E1DFDD"/>
<circle cx="700.500" cy="71.500" r="4.500" fill="none" stroke="#3B3A39" stroke-width="1.200"/>
<path d="M697.500 75 L691.500 80.500" stroke="#3B3A39" stroke-width="1.300" fill="none"/>
<!-- Dictate -->
<rect x="741" y="64.500" width="11" height="18.500" rx="2" fill="#6FB1EA" stroke="#2B7CD3"/>
<path d="M738.500 77 C738.500 89.500 754.500 89.500 754.500 77 M746.500 86.500 V89.500 M743 89.500 H750" fill="none" stroke="#3B3A39" stroke-width="1.100"/>

<g fill="none" stroke="#3B3A39" stroke-width="1.100">
  <circle cx="779" cy="43.500" r="6.800"/>
  <path d="M775.500 45.500 Q779 49 782.500 45.500"/>
  <circle cx="776.500" cy="41.500" r="0.700" fill="#3B3A39"/>
  <circle cx="781.500" cy="41.500" r="0.700" fill="#3B3A39"/>
</g>
</svg>

<div id="bl" class="abs"></div>
<div id="br" class="abs"></div>
<div id="bb" class="abs"></div>
</body>
</html>
